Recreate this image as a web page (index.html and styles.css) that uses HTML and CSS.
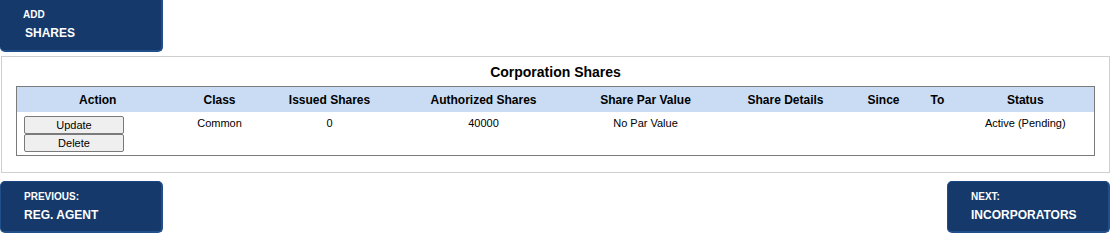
FILE: index.html
```html
<!DOCTYPE html>
<html>
<head>
<meta charset="utf-8">
<link rel="stylesheet" href="styles.css">
</head>
<body>
<div class="top">
  <a class="navbtn" href="#"><span class="small">ADD</span><span class="big">SHARES</span></a>
</div>
<div class="panel">
  <div class="title">Corporation Shares</div>
  <table class="grid">
    <colgroup>
      <col class="c1"><col class="c2"><col class="c3"><col class="c4"><col class="c5"><col class="c6"><col class="c7"><col class="c8"><col class="c9">
    </colgroup>
    <thead>
      <tr><th>Action</th><th>Class</th><th>Issued Shares</th><th>Authorized Shares</th><th>Share Par Value</th><th>Share Details</th><th>Since</th><th>To</th><th>Status</th></tr>
    </thead>
    <tbody>
      <tr>
        <td class="actions"><button class="btn">Update</button><button class="btn">Delete</button></td>
        <td>Common</td><td>0</td><td>40000</td><td>No Par Value</td><td></td><td></td><td></td><td>Active (Pending)</td>
      </tr>
    </tbody>
  </table>
</div>
<div class="bottom">
  <a class="navbtn" href="#"><span class="small">PREVIOUS:</span><span class="big">REG. AGENT</span></a>
  <a class="navbtn" href="#"><span class="small">NEXT:</span><span class="big">INCORPORATORS</span></a>
</div>
</body>
</html>
```
FILE: styles.css
```css
html, body { margin: 0; padding: 0; background: #fff; }
body { font-family: "Liberation Sans", Arial, sans-serif; color: #000; width: 1112px; }
.top { display: flex; height: 51px; }
.navbtn {
  box-sizing: border-box;
  width: 163px; height: 52px;
  background: #14396a;
  border-right: 2px solid #214f8a;
  border-bottom: 2px solid #214f8a;
  border-radius: 0 0 5px 5px;
  color: #fff; text-decoration: none;
  display: flex; flex-direction: column;
  padding: 9px 0 0 23px;
}
.small { font-size: 10px; font-weight: bold; line-height: 12px; }
.big { font-size: 12px; font-weight: bold; line-height: 14px; margin-top: 5px; padding-left: 2px; }
.bottom .big { padding-left: 0; }
.bottom .navbtn { border-radius: 5px; border-left: 1px solid #214f8a; border-top: 1px solid #1a4680; padding-top: 9px; }
.panel {
  margin: 5px 2px 0 1px;
  border: 1px solid #cfcfcf;
  padding: 7px 14px 16px 14px;
  height: 92px;
}
.title { text-align: center; font-size: 14px; font-weight: bold; line-height: 16px; margin-bottom: 6px; }
.grid { border-collapse: collapse; border: 1px solid #7a7a7a; width: 1079px; table-layout: fixed; }
.c1 { width: 162px; } .c2 { width: 82px; } .c3 { width: 138px; } .c4 { width: 170px; } .c5 { width: 154px; }
.c6 { width: 126px; } .c7 { width: 70px; } .c8 { width: 38px; } .c9 { width: auto; }
th { background: #c9dcf3; font-size: 12px; font-weight: bold; height: 25px; padding: 0; text-align: center; }
td { font-size: 11px; text-align: center; vertical-align: top; padding: 5px 0 3px; height: 35px; }
td.actions { text-align: left; padding: 4px 0 3px 7px; }
.btn {
  display: block; box-sizing: border-box;
  width: 100px; height: 18px; margin: 0;
  font-family: "Liberation Sans", Arial, sans-serif; font-size: 11px;
  background: #efefef; border: 1px solid #7a7a7a; border-radius: 2px;
  padding: 0; color: #000;
}
.bottom { display: flex; justify-content: space-between; margin-top: 8px; margin-right: 2px; }
```
